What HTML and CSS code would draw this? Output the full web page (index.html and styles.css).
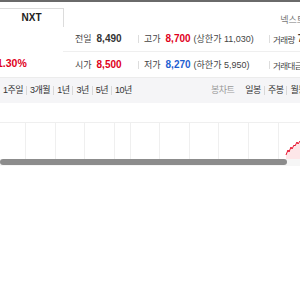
FILE: index.html
```html
<!DOCTYPE html>
<html lang="ko">
<head>
    <meta charset="UTF-8">
    <meta name="viewport" content="width=device-width, initial-scale=1.0">
    <title>NXT 시세</title>
    <link rel="stylesheet" href="styles.css">
</head>
<body>
<div class="page">
    <div class="topbar"></div>

    <div class="header">
        <div class="tab">NXT</div>
        <div class="market">넥스트레이드</div>
    </div>

    <div class="quote">
        <div class="side">
            <div class="rate up">1.30%</div>
        </div>
        <div class="table">
            <div class="row">
                <div class="cell c1"><span class="lbl">전일</span><b>8,490</b></div>
                <div class="cell c2"><span class="lbl">고가</span><b class="up">8,700</b><span class="sub">(상한가 11,030)</span></div>
                <div class="cell c3"><span class="lbl">거래량</span><b>7</b></div>
            </div>
            <div class="row">
                <div class="cell c1"><span class="lbl">시가</span><b class="up">8,500</b></div>
                <div class="cell c2"><span class="lbl">저가</span><b class="down">8,270</b><span class="sub">(하한가 5,950)</span></div>
                <div class="cell c3"><span class="lbl">거래대금</span></div>
            </div>
        </div>
    </div>

    <div class="periods">
        <div class="group">
            <span>1주일</span><span>3개월</span><span>1년</span><span>3년</span><span>5년</span><span>10년</span>
        </div>
        <div class="group right">
            <span class="kind">봉차트</span><span>일봉</span><span>주봉</span><span>월봉</span>
        </div>
    </div>

    <div class="chart">
        <svg width="300" height="56" viewBox="0 0 300 56">
            <!-- 격자 -->
            <g stroke="#efefef" stroke-width="1">
                <line x1="0" y1="19.5" x2="300" y2="19.5"/>
                <line x1="25.5" y1="20" x2="25.5" y2="56"/>
                <line x1="55.5" y1="20" x2="55.5" y2="56"/>
                <line x1="84.5" y1="20" x2="84.5" y2="56"/>
                <line x1="114.5" y1="20" x2="114.5" y2="56"/>
                <line x1="130.5" y1="20" x2="130.5" y2="56"/>
                <line x1="159.5" y1="20" x2="159.5" y2="56"/>
                <line x1="189.5" y1="20" x2="189.5" y2="56"/>
                <line x1="218.5" y1="20" x2="218.5" y2="56"/>
                <line x1="248.5" y1="20" x2="248.5" y2="56"/>
                <line x1="278.5" y1="20" x2="278.5" y2="56"/>
            </g>
            <!-- 가격선 -->
            <path d="M286 56 L286 52 L288 47 L289 49 L291 44 L292 46 L294 42 L295 43 L297 39 L298 41 L300 38 L300 56 Z" fill="#fde6e8"/>
            <path d="M286 52 L288 47 L289 49 L291 44 L292 46 L294 42 L295 43 L297 39 L298 41 L300 38" fill="none" stroke="#e8112d" stroke-width="1"/>
        </svg>
    </div>

    <div class="scroll">
        <div class="thumb"></div>
    </div>
</div>
</body>
</html>
```

FILE: styles.css
```css
body {
    margin: 0;
    overflow: hidden;
    font-family: "Liberation Sans", "Noto Sans CJK KR", sans-serif;
    color: #333;
    background: #fff;
}
.page {
    width: 300px;
    overflow: hidden;
}
.topbar {
    height: 2px;
    background: #6a6a6a;
}
.header {
    display: flex;
    justify-content: space-between;
    height: 24px;
    padding-top: 6px;
    box-sizing: border-box;
}
.tab {
    width: 63px;
    height: 18px;
    margin-left: -1px;
    border: 1px solid #dcdcdc;
    border-bottom: none;
    font-size: 10px;
    font-weight: bold;
    color: #222;
    text-align: center;
    line-height: 18px;
}
.market {
    margin-right: -30px;
    padding-top: 5px;
    font-size: 9px;
    color: #777;
    white-space: nowrap;
}
.quote {
    display: flex;
    height: 51px;
}
.side {
    width: 63px;
    flex-shrink: 0;
}
.rate {
    margin-top: 31px;
    margin-left: -3px;
    font-size: 10.5px;
    font-weight: bold;
    white-space: nowrap;
}
.up {
    color: #e0001b;
}
.down {
    color: #1f5fd1;
}
.table {
    flex: 1;
    min-width: 0;
}
.row {
    display: flex;
    height: 25px;
    align-items: center;
    white-space: nowrap;
}
.row + .row {
    border-top: 1px solid #efefef;
}
.cell {
    display: flex;
    flex-shrink: 0;
    align-items: center;
    font-size: 10px;
}
.cell b {
    font-size: 10px;
    margin-right: 3px;
}
.lbl {
    color: #444;
    font-size: 9px;
    margin-right: 5px;
}
.c3 .lbl {
    font-size: 8.5px;
    letter-spacing: -0.6px;
    margin-right: 3px;
}
.sub {
    font-size: 9px;
    color: #444;
}
.c1 {
    width: 75px;
    padding-left: 12px;
    box-sizing: border-box;
}
.c2 {
    width: 131px;
    padding-left: 5px;
    box-sizing: border-box;
    border-left: 1px solid #ddd;
    height: 8px;
}
.c3 {
    padding-left: 3px;
    border-left: 1px solid #ddd;
    height: 8px;
}
.periods {
    display: flex;
    justify-content: space-between;
    height: 25px;
    background: #f5f5f7;
    border-top: 1px solid #ececec;
    font-size: 9px;
    letter-spacing: -0.5px;
    white-space: nowrap;
}
.group {
    display: flex;
    flex-shrink: 0;
    align-items: center;
    padding-left: 3px;
}
.group span {
    color: #333;
    padding: 0 3px;
    line-height: 9px;
    border-left: 1px solid #d8d8d8;
}
.group span:first-child {
    border-left: none;
    padding-left: 0;
}
.group.right {
    margin-right: -9px;
}
.group .kind {
    color: #999;
    border-left: none;
    padding-right: 8px;
}
.group .kind + span {
    border-left: none;
}
.chart {
    height: 56px;
}
.chart svg {
    display: block;
}
.scroll {
    height: 7px;
    background: #f6f6f6;
}
.thumb {
    width: 287px;
    height: 6px;
    border-radius: 3px;
    background: #8c8c8c;
}
```
